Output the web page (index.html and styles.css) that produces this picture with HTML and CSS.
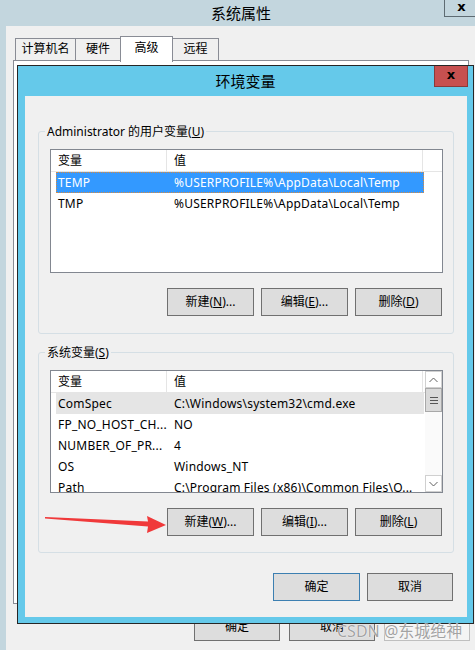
FILE: index.html
```html
<!DOCTYPE html>
<html lang="zh-CN">
<head>
<meta charset="utf-8">
<title>环境变量</title>
<link rel="stylesheet" href="styles.css">
</head>
<body>
<div class="sysprop">
  <div class="sp-title">
    <span></span>
    <span class="sp-title-text">系统属性</span>
    <span class="sp-close">x</span>
  </div>
  <div class="sp-body">
    <div class="tabs">
      <div class="tab t1">计算机名</div>
      <div class="tab t2">硬件</div>
      <div class="tab t3 active">高级</div>
      <div class="tab t4">远程</div>
    </div>
    <div class="tabpanel"></div>
    <div class="sp-buttons">
      <div class="btn w86">确定</div>
      <div class="btn w86">取消</div>
      <div class="btn w86 disabled"></div>
    </div>
  </div>
</div>

<div class="envdlg">
  <div class="dlg-title">
    <span></span>
    <span class="dlg-title-text">环境变量</span>
    <span class="dlg-close">x</span>
  </div>
  <div class="dlg-body">
    <fieldset class="group">
      <legend>Administrator 的用户变量(<u>U</u>)</legend>
      <div class="list">
        <div class="list-main">
          <div class="list-head">
            <div class="hcell c1">变量</div>
            <div class="hcell c2">值</div>
            <div class="hfill"></div>
          </div>
          <div class="rows">
            <div class="row selected"><div class="cell c1">TEMP</div><div class="cell c2">%USERPROFILE%\AppData\Local\Temp</div></div>
            <div class="row"><div class="cell c1">TMP</div><div class="cell c2">%USERPROFILE%\AppData\Local\Temp</div></div>
          </div>
        </div>
      </div>
      <div class="btnrow">
        <div class="btn w87">新建(<u>N</u>)...</div>
        <div class="btn w87">编辑(<u>E</u>)...</div>
        <div class="btn w87">删除(<u>D</u>)</div>
      </div>
    </fieldset>

    <fieldset class="group g2">
      <legend>系统变量(<u>S</u>)</legend>
      <div class="list">
        <div class="list-main">
          <div class="list-head">
            <div class="hcell c1">变量</div>
            <div class="hcell c2">值</div>
            <div class="hfill"></div>
          </div>
          <div class="rows">
            <div class="row inactive-sel"><div class="cell c1">ComSpec</div><div class="cell c2">C:\Windows\system32\cmd.exe</div></div>
            <div class="row"><div class="cell c1">FP_NO_HOST_CH...</div><div class="cell c2">NO</div></div>
            <div class="row"><div class="cell c1">NUMBER_OF_PR...</div><div class="cell c2">4</div></div>
            <div class="row"><div class="cell c1">OS</div><div class="cell c2">Windows_NT</div></div>
            <div class="row"><div class="cell c1">Path</div><div class="cell c2">C:\Program Files (x86)\Common Files\O...</div></div>
          </div>
        </div>
        <div class="vscroll">
          <div class="sb-btn">
            <svg width="9" height="6" viewBox="0 0 9 6"><polyline points="0.5,5 4.5,1 8.5,5" fill="none" stroke="#606060" stroke-width="1"/></svg>
          </div>
          <div class="sb-thumb">
            <svg width="8" height="7" viewBox="0 0 8 7"><path d="M0 0.5H8M0 3.5H8M0 6.5H8" stroke="#555" stroke-width="1"/></svg>
          </div>
          <div class="sb-track"></div>
          <div class="sb-btn">
            <svg width="9" height="6" viewBox="0 0 9 6"><polyline points="0.5,1 4.5,5 8.5,1" fill="none" stroke="#606060" stroke-width="1"/></svg>
          </div>
        </div>
      </div>
      <div class="btnrow">
        <div class="btn w87">新建(<u>W</u>)...</div>
        <div class="btn w87">编辑(<u>I</u>)...</div>
        <div class="btn w87">删除(<u>L</u>)</div>
      </div>
    </fieldset>

    <div class="dlg-buttons">
      <div class="btn w87 default">确定</div>
      <div class="btn w86">取消</div>
    </div>
  </div>
</div>

<svg class="arrow" width="475" height="650" viewBox="0 0 475 650">
  <path d="M45 517 L148 521.5 L147 516 L166 525 L147 533 L148 526.5 L45 518.6 Z" fill="#f0393a"/>
</svg>

<div class="watermark">CSDN @东城绝神</div>
</body>
</html>
```

FILE: styles.css
```css
html, body {
  margin: 0;
  padding: 0;
  width: 475px;
  height: 650px;
  overflow: hidden;
}

body {
  position: relative;
  background: #c3d6de;
  font-family: "Noto Sans", "Noto Sans CJK SC", sans-serif;
  font-size: 12px;
  color: #000;
}

u { text-decoration: underline; text-underline-offset: 1px; }

/* ---------- outer window: 系统属性 ---------- */
.sysprop {
  width: 482px;
  height: 650px;
  display: flex;
  flex-direction: column;
}

.sp-title {
  height: 26px;
  flex: none;
  display: grid;
  grid-template-columns: 1fr auto 1fr;
  align-items: start;
}

.sp-title-text {
  font-size: 15px;
  line-height: 26px;
}

.sp-close {
  justify-self: end;
  margin-right: 4px;
  width: 34px;
  height: 17px;
  box-sizing: border-box;
  border-left: 1px solid #5e6b72;
  border-bottom: 1px solid #5e6b72;
  text-align: center;
  font-weight: bold;
  font-size: 13px;
  line-height: 13px;
  font-family: "DejaVu Sans", sans-serif;
}

.sp-body {
  flex: 1;
  margin: 0 6px;
  background: #f0f0f0;
  padding-top: 10px;
  display: flex;
  flex-direction: column;
}

.tabs {
  display: flex;
  align-items: flex-end;
  height: 24px;
  margin-left: 9px;
}

.tab {
  height: 22px;
  box-sizing: border-box;
  border: 1px solid #898c95;
  border-bottom: none;
  background: #f0f0f0;
  text-align: center;
  line-height: 20px;
  margin-left: -1px;
}
.tab.t1 { width: 61px; margin-left: 0; }
.tab.t2 { width: 46px; }
.tab.t3 { width: 53px; }
.tab.t4 { width: 47px; }

.tab.active {
  height: 26px;
  margin-bottom: -2px;
  background: #fff;
  position: relative;
  z-index: 1;
  line-height: 22px;
}

.tabpanel {
  margin-left: 7px;
  width: 456px;
  height: 544px;
  box-sizing: border-box;
  border: 1px solid #898c95;
  background: #fff;
}

.sp-buttons {
  display: flex;
  gap: 9px;
  margin-top: 9px;
  padding-left: 188px;
}

/* ---------- buttons ---------- */
.btn {
  height: 28px;
  box-sizing: border-box;
  border: 1px solid #707070;
  background: #dddddd;
  text-align: center;
  line-height: 26px;
  white-space: nowrap;
}
.btn.w86 { width: 86px; }
.btn.w87 { width: 87px; }
.btn.default { border-color: #3c7fb1; }
.btn.disabled { border-color: #bfbfbf; background: #f4f4f4; }

/* ---------- inner dialog: 环境变量 ---------- */
.envdlg {
  position: absolute;
  left: 17px;
  top: 65px;
  width: 457px;
  height: 559px;
  box-sizing: border-box;
  border: 1px solid #262626;
  background: #65c9ea;
  display: flex;
  flex-direction: column;
  z-index: 2;
}

.dlg-title {
  height: 30px;
  flex: none;
  display: grid;
  grid-template-columns: 1fr auto 1fr;
  align-items: start;
}

.dlg-title-text {
  font-size: 15px;
  line-height: 30px;
}

.dlg-close {
  justify-self: end;
  margin-right: 5px;
  width: 34px;
  height: 21px;
  box-sizing: border-box;
  background: #c75050;
  border: 1px solid #8a3a3a;
  border-top: none;
  text-align: center;
  font-weight: bold;
  font-size: 13px;
  line-height: 18px;
  font-family: "DejaVu Sans", sans-serif;
}

.dlg-body {
  margin: 0 6px 6px 7px;
  height: 521px;
  box-sizing: border-box;
  background: #f0f0f0;
  padding: 27px 13px 0 13px;
  display: flex;
  flex-direction: column;
}

.group {
  margin: 0;
  padding: 9px 10px 17px 11px;
  border: 1px solid #d5dfe5;
  border-radius: 3px;
  min-width: 0;
}
.group.g2 { margin-top: 10px; padding-bottom: 16px; }

.group legend {
  margin-left: -5px;
  padding: 0 2px;
  line-height: 17px;
}

.list {
  height: 124px;
  box-sizing: border-box;
  border: 1px solid #828790;
  background: #fff;
  display: flex;
  overflow: hidden;
}
.g2 .list { height: 123px; }

.list-main {
  flex: 1;
  min-width: 0;
  display: flex;
  flex-direction: column;
}

.list-head {
  display: flex;
  height: 22px;
  flex: none;
  box-sizing: border-box;
  border-bottom: 1px solid #e5e5e5;
  line-height: 21px;
}

.hcell {
  box-sizing: border-box;
  border-right: 1px solid #e5e5e5;
  padding-left: 7px;
}
.hcell.c1 { width: 116px; }
.hcell.c2 { width: 256px; }
.hfill { flex: 1; }

.rows {
  flex: 1;
  overflow: hidden;
  padding-left: 5px;
}

.row {
  display: flex;
  width: 368px;
  height: 21px;
  line-height: 21px;
  box-sizing: border-box;
}

.cell {
  padding-left: 2px;
  white-space: nowrap;
  overflow: hidden;
  letter-spacing: 0.2px;
}
.cell.c1 { width: 116px; flex: none; box-sizing: border-box; }
.cell.c2 { flex: 1; }

.row.selected {
  background: #3399ff;
  color: #fff;
  outline: 1px dotted #d98a3d;
  outline-offset: -1px;
}

.row.inactive-sel { background: #e5e5e5; }

.vscroll {
  width: 17px;
  flex: none;
  display: flex;
  flex-direction: column;
  background: #fafafa;
}

.sb-btn {
  height: 17px;
  box-sizing: border-box;
  border: 1px solid #d0d0d0;
  background: #fff;
  display: flex;
  align-items: center;
  justify-content: center;
  flex: none;
}

.sb-thumb {
  height: 24px;
  box-sizing: border-box;
  border: 1px solid #a8a8a8;
  background: #dadada;
  display: flex;
  align-items: center;
  justify-content: center;
  flex: none;
}

.sb-track { flex: 1; }

.btnrow {
  display: flex;
  justify-content: flex-end;
  gap: 7px;
  margin-top: 15px;
  margin-right: 1px;
}

.dlg-buttons {
  display: flex;
  justify-content: flex-end;
  gap: 7px;
  margin-top: 20px;
  margin-right: 1px;
}

/* ---------- overlays ---------- */
.arrow {
  position: absolute;
  left: 0;
  top: 0;
  z-index: 5;
  pointer-events: none;
}

.watermark {
  position: absolute;
  left: 337px;
  top: 621px;
  z-index: 5;
  font-size: 16px;
  line-height: 20px;
  color: #a3a3a3;
  text-shadow: 0 0 1px #fff, 0 0 1px #fff;
  white-space: nowrap;
}
```
